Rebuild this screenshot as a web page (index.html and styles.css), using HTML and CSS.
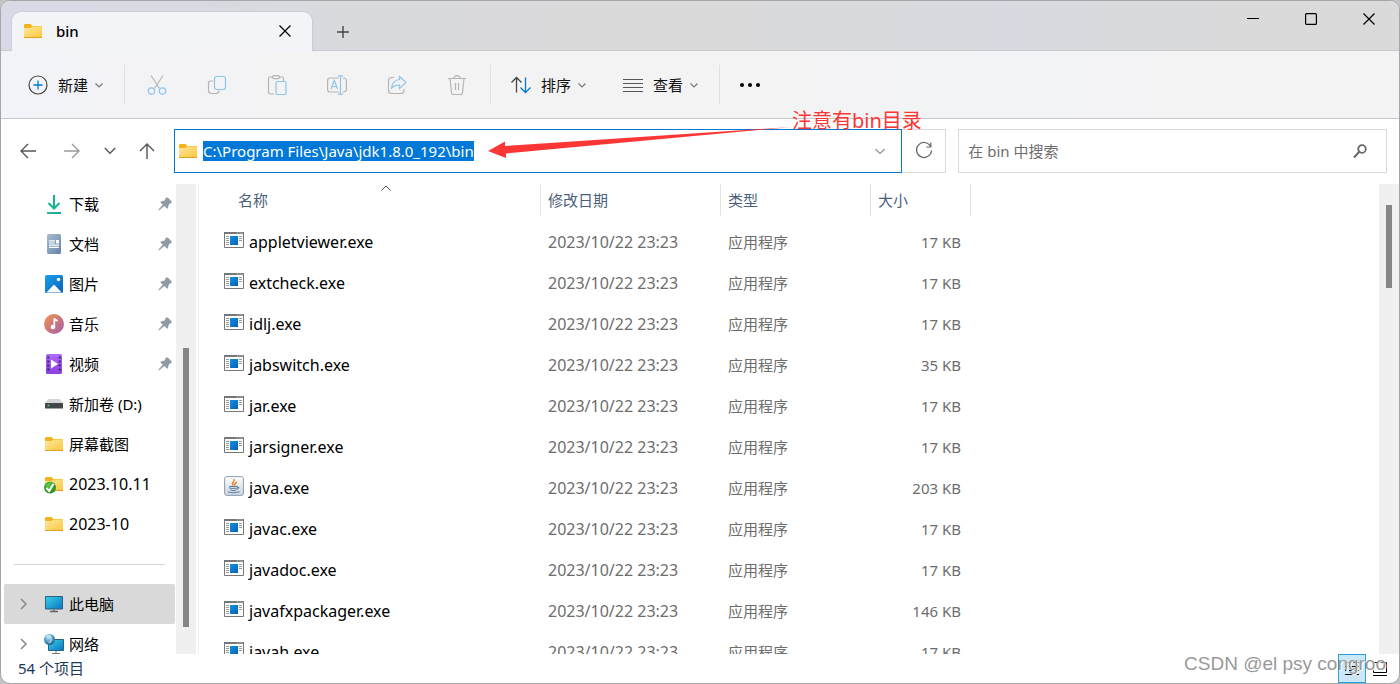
FILE: index.html
```html
<!DOCTYPE html>
<html lang="zh-CN">
<head>
<meta charset="utf-8">
<meta name="viewport" content="width=device-width, initial-scale=1">
<title>bin</title>
<link rel="stylesheet" href="styles.css">
</head>
<body>
<svg class="sprite" aria-hidden="true">
  <defs>
    <linearGradient id="g-folder" x1="0" y1="0" x2="1" y2="1"><stop offset="0" stop-color="#ffe7a0"/><stop offset="1" stop-color="#fcc93f"/></linearGradient>
    <linearGradient id="g-app" x1="0" y1="0" x2="1" y2="1"><stop offset="0" stop-color="#1391e0"/><stop offset="1" stop-color="#0560b8"/></linearGradient>
    <linearGradient id="g-screen" x1="0" y1="0" x2="1" y2="1"><stop offset="0" stop-color="#35d3e6"/><stop offset="1" stop-color="#0c72c4"/></linearGradient>
    <linearGradient id="g-down" x1="0" y1="0" x2="1" y2="1"><stop offset="0" stop-color="#2fc98a"/><stop offset="1" stop-color="#0a9c9c"/></linearGradient>
    <linearGradient id="g-doc" x1="0" y1="0" x2="1" y2="1"><stop offset="0" stop-color="#a9bdd2"/><stop offset="1" stop-color="#6584a6"/></linearGradient>
    <linearGradient id="g-pic" x1="0" y1="0" x2="1" y2="1"><stop offset="0" stop-color="#18a2ec"/><stop offset="1" stop-color="#0a5fb8"/></linearGradient>
    <linearGradient id="g-music" x1="0" y1="0" x2="1" y2="1"><stop offset="0" stop-color="#f1954c"/><stop offset="1" stop-color="#a85bb0"/></linearGradient>
    <linearGradient id="g-video" x1="0" y1="0" x2="0" y2="1"><stop offset="0" stop-color="#b06cf5"/><stop offset="1" stop-color="#8a3fe0"/></linearGradient>
    <linearGradient id="g-java" x1="0" y1="0" x2="0" y2="1"><stop offset="0" stop-color="#fdfdfd"/><stop offset="1" stop-color="#c9d3dc"/></linearGradient>
    <radialGradient id="g-globe" cx=".4" cy=".3" r=".7"><stop offset="0" stop-color="#c9e8f5"/><stop offset=".5" stop-color="#5aa5cc"/><stop offset="1" stop-color="#24638f"/></radialGradient>
    <radialGradient id="g-ok" cx=".4" cy=".3" r=".8"><stop offset="0" stop-color="#62c84a"/><stop offset="1" stop-color="#17820e"/></radialGradient>
  </defs>
  <symbol id="i-folder" viewBox="0 0 20 20"><path d="M1 4.500Q1 3 2 3h5.500l1.800 2H18q1 0 1 1v10.500H1z" fill="#f4b21b"/><path d="M1 7h6.500l2-1.500H19V16H1z" fill="url(#g-folder)"/><path d="M1 16h18v1H1z" fill="#e2a41f"/></symbol>
  <symbol id="i-folder-ok" viewBox="0 0 20 20"><use href="#i-folder"/><circle cx="6" cy="13.500" r="6" fill="url(#g-ok)"/><path d="M2.500 14l2.700 3L9.500 9.800" fill="none" stroke="#fff" stroke-width="2"/></symbol>
  <symbol id="i-app" viewBox="0 0 20 16"><path d="M.5.5h19v15H.5z" fill="#fff" stroke="#777"/><path d="M0 0h20v2H0z" fill="#777"/><path d="M13 1h1m1.500 0h1m1 0h1" stroke="#ddd"/><path d="M2 4.500h3m-3 2h3m-3 2h3m-3 2h3m-3 2h3M15 4.500h3m-3 2h3m-3 2h3" stroke="#999"/><path d="M6 4h8v9H6z" fill="url(#g-app)"/></symbol>
  <symbol id="i-java" viewBox="0 0 20 20"><rect x=".6" y=".6" width="18.800" height="18.800" rx="2" fill="url(#g-java)" stroke="#8b9eb1"/><path d="M9.500 9.500C6 7 12 5.500 9.700 3M11.200 9.500c-2-1.500 1.300-2.400 1.600-3.800" fill="none" stroke="#ed7a24" stroke-width="1.400"/><path d="M5.500 10.500h8q-.3 3.500-2 4H8q-2-.8-2.500-4zM13.500 11q3 .2 0 2.300M4 15.800q5 2 11.500 0" fill="none" stroke="#5c7f9c"/><path d="M7 12.400h5" stroke="#5c7f9c"/></symbol>
  <symbol id="i-down" viewBox="0 0 20 20"><path d="M10 1v13M4.500 9l5.500 5.500L15.500 9" fill="none" stroke="#13b38f" stroke-width="2"/><path d="M3 18h14v2H3z" fill="url(#g-down)"/></symbol>
  <symbol id="i-doc" viewBox="0 0 20 20"><rect x="3" width="14" height="20" rx="1.500" fill="url(#g-doc)"/><path d="M5 6.800h6M5 9h6M5 11.200h10M5 13.300h10" stroke="#fff" stroke-width="1.200"/><path d="M12 6h3v3.500h-3z" fill="#fff"/></symbol>
  <symbol id="i-pic" viewBox="0 0 20 20"><rect x="1" y="1" width="18" height="18" rx="1.500" fill="url(#g-pic)"/><path d="M2.500 18.500l7-7.500q.5-.5 1 0l7.200 7.500z" fill="#fff"/><circle cx="14.500" cy="5.500" r="1.700" fill="#fff"/></symbol>
  <symbol id="i-music" viewBox="0 0 20 20"><circle cx="10" cy="10" r="10" fill="url(#g-music)"/><circle cx="9" cy="13" r="2.300" fill="#fff"/><path d="M10.300 13V4.500q1 2 3.400 2.200" fill="none" stroke="#fff" stroke-width="1.700"/></symbol>
  <symbol id="i-video" viewBox="0 0 20 20"><rect x="2" width="16" height="20" rx="1.500" fill="url(#g-video)"/><path d="M4.300 2.500v16M15.700 2.500v16" stroke="#432070" stroke-width="2" stroke-dasharray="2 2"/><path d="M7 5.500l7 4.500-7 4.500z" fill="#fff"/></symbol>
  <symbol id="i-drive" viewBox="0 0 20 20"><path d="M4 5h12l3 5H1z" fill="#d3d5d8"/><rect x="1" y="9" width="18" height="5.500" rx=".5" fill="#44474a"/><path d="M3.500 11.500h2" stroke="#42e05c" stroke-width="1.400"/></symbol>
  <symbol id="i-pc" viewBox="0 0 20 20"><path d="M1.500 2.500h17v12.500h-17z" fill="url(#g-screen)" stroke="#28627d"/><path d="M10 15.500v2M6 17.500h8" stroke="#666" stroke-width="1.400"/></symbol>
  <symbol id="i-net" viewBox="0 0 20 20"><path d="M4.500 5.500h15v11h-15z" fill="url(#g-screen)" stroke="#28627d"/><path d="M12 17v2.500M8 19.500h8" stroke="#777"/><circle cx="5.500" cy="5.500" r="5.500" fill="url(#g-globe)"/><path d="M2 3q4-3 5 1T4.500 8.500" fill="none" stroke="#e1f4fb" opacity=".6" stroke-width="1.500"/></symbol>
  <symbol id="i-pin" viewBox="0 0 14 14"><path d="M8 .8q1-1.200 2 0l3.300 3.300q1 1-.2 1.800L10.800 7.500l-.8 3.500q-.4 1-1.300.2L6.300 9 1.500 13 .5 13.200.8 12.200 4.800 7.800 2.800 5.800Q2 5 3 4.500L6.500 3.500z" fill="#8f9aa3"/></symbol>
  <symbol id="i-chev" viewBox="0 0 10 10"><path d="M1.500 3.500L5 7l3.500-3.500" fill="none" stroke="currentColor" stroke-width="1.200"/></symbol>
  <symbol id="i-x" viewBox="0 0 12 12"><path d="M.5.5l11 11M11.500.5l-11 11" fill="none" stroke="currentColor" stroke-width="1.200"/></symbol>
</svg>

<div class="window">
  <header class="titlebar">
    <div class="tab">
      <svg class="ic20"><use href="#i-folder"/></svg>
      <span class="tab-title">bin</span>
      <button class="plain" aria-label="关闭标签页"><svg class="ic12"><use href="#i-x"/></svg></button>
    </div>
    <button class="plain new-tab" aria-label="新建标签页"><svg class="ic12" viewBox="0 0 12 12"><path d="M6 0v12M0 6h12" stroke="#444" stroke-width="1.400"/></svg></button>
    <div class="win-buttons">
      <button class="plain" aria-label="最小化"><svg class="ic12" viewBox="0 0 12 12"><path d="M0 5.500h12" stroke="#000"/></svg></button>
      <button class="plain" aria-label="最大化"><svg class="ic12" viewBox="0 0 12 12"><rect x=".6" y=".6" width="10.800" height="10.800" rx="1" fill="none" stroke="#000" stroke-width="1.200"/></svg></button>
      <button class="plain" aria-label="关闭"><svg class="ic12"><use href="#i-x"/></svg></button>
    </div>
  </header>

  <div class="toolbar" role="toolbar">
    <button class="plain tool first"><svg class="ic20" viewBox="0 0 20 20"><circle cx="10" cy="10" r="9" fill="none" stroke="#444" stroke-width="1.200"/><path d="M10 5.500v9M5.500 10h9" stroke="#0078d4" stroke-width="1.300"/></svg>新建<svg class="ic10"><use href="#i-chev"/></svg></button>
    <span class="sep"></span>
    <div class="group">
      <button class="plain tool-icon" aria-label="剪切" disabled><svg class="ic20" viewBox="0 0 20 20" fill="none"><path d="M4 .5l8.500 13M16 .5l-8.500 13" stroke="#b5b5b5" stroke-width="1.200"/><circle cx="4.500" cy="16" r="3.200" stroke="#8ec5ee" stroke-width="1.200"/><circle cx="15.500" cy="16" r="3.200" stroke="#8ec5ee" stroke-width="1.200"/></svg></button>
      <button class="plain tool-icon" aria-label="复制" disabled><svg class="ic20" viewBox="0 0 20 20" fill="none" stroke-width="1.200"><path d="M6 6H3.500Q1.500 6 1.500 8v7.500q0 3 3 3H9q3 0 3-3" stroke="#b5b5b5"/><rect x="7.500" y="1.500" width="11" height="13" rx="2.500" stroke="#8ec5ee"/></svg></button>
      <button class="plain tool-icon" aria-label="粘贴" disabled><svg class="ic20" viewBox="0 0 20 20" fill="none" stroke-width="1.200"><path d="M7 19H3q-1.500 0-1.500-1.500v-14Q1.500 2 3 2h12q1.500 0 1.500 1.500V6" stroke="#b5b5b5"/><rect x="5.500" y=".6" width="7" height="3" rx="1.500" fill="#f3f3f3" stroke="#b5b5b5"/><rect x="9" y="6.500" width="10" height="13" rx="1.500" stroke="#8ec5ee"/></svg></button>
      <button class="plain tool-icon" aria-label="重命名" disabled><svg class="ic20" viewBox="0 0 20 20" fill="none" stroke-width="1.200"><path d="M12 3H3Q.6 3 .6 5.500v9Q.6 17 3 17h9M16 3q3.400 0 3.400 3v8q0 3-3.400 3" stroke="#b5b5b5"/><path d="M4 14l3.300-8.500L10.600 14M5 11.500h4.600M13.500.8v18.400M11 .8h5M11 19.200h5" stroke="#8ec5ee"/></svg></button>
      <button class="plain tool-icon" aria-label="共享" disabled><svg class="ic20" viewBox="0 0 20 20" fill="none" stroke-width="1.200"><path d="M7 2.500H4.500q-3 0-3 3v10q0 3 3 3H14q3 0 3-3V14" stroke="#b5b5b5"/><path d="M12.500 1.500l6.500 6-6.500 6V10q-5-.2-8 3 .7-7.500 8-8.500z" stroke="#8ec5ee"/></svg></button>
      <button class="plain tool-icon" aria-label="删除" disabled><svg class="ic20" viewBox="0 0 20 20" fill="none" stroke="#b5b5b5" stroke-width="1.200"><path d="M1 3.500h18M7 3.500Q7 .6 10 .6t3 2.900M3 3.500l1.500 14q.2 2 2 2h7q1.800 0 2-2l1.500-14M8.500 8v7M11.500 8v7"/></svg></button>
    </div>
    <span class="sep"></span>
    <button class="plain tool"><svg class="ic20" viewBox="0 0 20 20" fill="none" stroke-width="1.300"><path d="M5.500 17.500v-15M.5 7.500l5-5 5 5" stroke="#444"/><path d="M14.500 2.500v15M9.500 12.500l5 5 5-5" stroke="#0078d4"/></svg>排序<svg class="ic10"><use href="#i-chev"/></svg></button>
    <button class="plain tool view"><svg class="ic20" viewBox="0 0 20 20" stroke="#555"><path d="M0 4.500h20M0 8.500h20M0 12.500h20M0 16.500h20"/></svg>查看<svg class="ic10"><use href="#i-chev"/></svg></button>
    <span class="sep"></span>
    <button class="plain tool" aria-label="更多"><svg class="ic20" viewBox="0 0 20 20"><circle cx="2" cy="10" r="2"/><circle cx="10" cy="10" r="2"/><circle cx="18" cy="10" r="2"/></svg></button>
  </div>

  <div class="navrow">
    <nav class="nav">
      <button class="plain" aria-label="后退"><svg class="ic16" viewBox="0 0 16 16"><path d="M16 8H1M8 1L1 8l7 7" fill="none" stroke="#555" stroke-width="1.400"/></svg></button>
      <button class="plain" aria-label="前进"><svg class="ic16" viewBox="0 0 16 16"><path d="M0 8h15M8 1l7 7-7 7" fill="none" stroke="#999" stroke-width="1.400"/></svg></button>
      <button class="plain slim" aria-label="最近"><svg class="ic12" viewBox="0 0 12 12"><path d="M.8 3L6 8.200 11.200 3" fill="none" stroke="#555" stroke-width="1.400"/></svg></button>
      <button class="plain" aria-label="向上"><svg class="ic16" viewBox="0 0 16 16"><path d="M8 16V1M1 8l7-7 7 7" fill="none" stroke="#555" stroke-width="1.400"/></svg></button>
    </nav>
    <div class="address">
      <svg class="ic20"><use href="#i-folder"/></svg>
      <input class="path" type="text" aria-label="地址" value="C:\Program Files\Java\jdk1.8.0_192\bin">
      <button class="plain drop" aria-label="历史地址"><svg class="ic12" viewBox="0 0 12 12"><path d="M1.500 4L6 8.500 10.500 4" fill="none" stroke="#444"/></svg></button>
      <div class="note">
        <svg class="note-arrow" viewBox="0 0 304 36"><path d="M0 24L17 14.500V19L304 0 18 26.500V31z" fill="#fb3735"/></svg>
        <span>注意有bin目录</span>
      </div>
    </div>
    <button class="plain refresh" aria-label="刷新"><svg class="ic20" viewBox="0 0 20 20" fill="none" stroke="#666" stroke-width="1.200"><path d="M16.500 5.200A7.500 7.500 0 1 0 17.500 9.500M16.800 1.500v4.500h-4.500"/></svg></button>
    <div class="search">
      <input type="search" aria-label="搜索" placeholder="在 bin 中搜索">
      <svg class="ic16" viewBox="0 0 16 16" fill="none" stroke="#666"><circle cx="10" cy="6" r="3.800" stroke-width="1.800"/><path d="M7.500 8.500L2 14.500" stroke-width="2"/></svg>
    </div>
  </div>

  <main class="content">
    <aside class="sidebar">
      <ul>
        <li><svg class="ic20"><use href="#i-down"/></svg>下载<svg class="pin"><use href="#i-pin"/></svg></li>
        <li><svg class="ic20"><use href="#i-doc"/></svg>文档<svg class="pin"><use href="#i-pin"/></svg></li>
        <li><svg class="ic20"><use href="#i-pic"/></svg>图片<svg class="pin"><use href="#i-pin"/></svg></li>
        <li><svg class="ic20"><use href="#i-music"/></svg>音乐<svg class="pin"><use href="#i-pin"/></svg></li>
        <li><svg class="ic20"><use href="#i-video"/></svg>视频<svg class="pin"><use href="#i-pin"/></svg></li>
        <li><svg class="ic20"><use href="#i-drive"/></svg>新加卷 (D:)</li>
        <li><svg class="ic20"><use href="#i-folder"/></svg>屏幕截图</li>
        <li class="latin"><svg class="ic20"><use href="#i-folder-ok"/></svg>2023.10.11</li>
        <li class="latin"><svg class="ic20"><use href="#i-folder"/></svg>2023-10</li>
      </ul>
      <hr>
      <ul>
        <li class="tree selected"><svg class="ic12 twist" viewBox="0 0 12 12"><path d="M4 1l5 5-5 5" fill="none" stroke="#888" stroke-width="1.500"/></svg><svg class="ic20"><use href="#i-pc"/></svg>此电脑</li>
        <li class="tree"><svg class="ic12 twist" viewBox="0 0 12 12"><path d="M4 1l5 5-5 5" fill="none" stroke="#888" stroke-width="1.500"/></svg><svg class="ic20"><use href="#i-net"/></svg>网络</li>
      </ul>
    </aside>
    <div class="scroll side-scroll"><div class="thumb"></div></div>
    <section class="files">
      <table>
        <colgroup><col class="c-name"><col class="c-date"><col class="c-type"><col class="c-size"></colgroup>
        <thead>
          <tr>
            <th><div class="th name-head">名称<svg class="sort" viewBox="0 0 10 6"><path d="M.5 5.500L5 1l4.500 4.500" fill="none" stroke="#555"/></svg></div></th>
            <th><div class="th">修改日期</div></th>
            <th><div class="th">类型</div></th>
            <th><div class="th">大小</div></th>
          </tr>
        </thead>
        <tbody>
          <tr><td><div class="file"><svg class="app"><use href="#i-app"/></svg>appletviewer.exe</div></td><td class="latin">2023/10/22 23:23</td><td>应用程序</td><td>17 KB</td></tr>
          <tr><td><div class="file"><svg class="app"><use href="#i-app"/></svg>extcheck.exe</div></td><td class="latin">2023/10/22 23:23</td><td>应用程序</td><td>17 KB</td></tr>
          <tr><td><div class="file"><svg class="app"><use href="#i-app"/></svg>idlj.exe</div></td><td class="latin">2023/10/22 23:23</td><td>应用程序</td><td>17 KB</td></tr>
          <tr><td><div class="file"><svg class="app"><use href="#i-app"/></svg>jabswitch.exe</div></td><td class="latin">2023/10/22 23:23</td><td>应用程序</td><td>35 KB</td></tr>
          <tr><td><div class="file"><svg class="app"><use href="#i-app"/></svg>jar.exe</div></td><td class="latin">2023/10/22 23:23</td><td>应用程序</td><td>17 KB</td></tr>
          <tr><td><div class="file"><svg class="app"><use href="#i-app"/></svg>jarsigner.exe</div></td><td class="latin">2023/10/22 23:23</td><td>应用程序</td><td>17 KB</td></tr>
          <tr><td><div class="file"><svg class="app java"><use href="#i-java"/></svg>java.exe</div></td><td class="latin">2023/10/22 23:23</td><td>应用程序</td><td>203 KB</td></tr>
          <tr><td><div class="file"><svg class="app"><use href="#i-app"/></svg>javac.exe</div></td><td class="latin">2023/10/22 23:23</td><td>应用程序</td><td>17 KB</td></tr>
          <tr><td><div class="file"><svg class="app"><use href="#i-app"/></svg>javadoc.exe</div></td><td class="latin">2023/10/22 23:23</td><td>应用程序</td><td>17 KB</td></tr>
          <tr><td><div class="file"><svg class="app"><use href="#i-app"/></svg>javafxpackager.exe</div></td><td class="latin">2023/10/22 23:23</td><td>应用程序</td><td>146 KB</td></tr>
          <tr><td><div class="file"><svg class="app"><use href="#i-app"/></svg>javah.exe</div></td><td class="latin">2023/10/22 23:23</td><td>应用程序</td><td>17 KB</td></tr>
        </tbody>
      </table>
    </section>
    <div class="scroll main-scroll"><div class="thumb"></div></div>
  </main>

  <footer class="status">
    <span class="count">54 个项目</span>
    <div class="views">
      <button class="plain active" aria-label="详细信息"><svg class="ic16" viewBox="0 0 16 16" stroke="#000"><path d="M1 1.500h3m1 0h10M1 5.500h3m1 0h10M1 9.500h3m1 0h10M1 13.500h14"/></svg></button>
      <button class="plain" aria-label="大图标"><svg class="ic16" viewBox="0 0 16 16" fill="none" stroke="#000"><path d="M1.500 1.500h13v10h-13zM1 14.500h14"/></svg></button>
    </div>
  </footer>
  <div class="watermark">CSDN @el psy congroo</div>
</div>
</body>
</html>
```
FILE: styles.css
```css
* { box-sizing: border-box; }

body {
  margin: 0;
  height: 100vh;
  background: #c4c4c6;
  color: #000;
  font: 15px/20px "Noto Sans", "Noto Sans CJK SC", sans-serif;
}

.sprite { position: absolute; width: 0; height: 0; }

.window {
  position: relative;
  display: flex;
  flex-direction: column;
  height: 100%;
  overflow: hidden;
  background: #fff;
  border: 1px solid #a6a6a8;
  border-radius: 10px;
}

.plain {
  display: flex;
  align-items: center;
  justify-content: center;
  padding: 0;
  border: 0;
  background: none;
  color: inherit;
  font: inherit;
}

svg { display: block; flex: none; }
.ic10 { width: 10px; height: 10px; }
.ic12 { width: 12px; height: 12px; }
.ic16 { width: 16px; height: 16px; }
.ic20 { width: 20px; height: 20px; }
.latin { font-size: 16px; }

/* Title bar */
.titlebar {
  display: flex;
  flex: none;
  height: 50px;
  padding-left: 11px;
  background: linear-gradient(90deg, #d8d9e6, #d9dadd 25%, #dadada 50%, #d7dae0 72%, #dadada 90%);
  border-bottom: 1px solid #c8c9cd;
}

.tab {
  display: flex;
  align-items: center;
  width: 300px;
  height: 39px;
  margin-top: 11px;
  padding: 0 21px 2px 11px;
  background: #f3f4f8;
  border-radius: 9px 9px 0 0;
  box-shadow: 0 0 1px 1px #cccdd4;
  clip-path: inset(-2px -2px 0);
}

.tab-title { flex: 1; padding-left: 13px; font-weight: 500; }
.new-tab { width: 40px; height: 36px; margin: 13px 0 0 11px; }
.win-buttons { display: flex; height: 36px; margin: 0 1px 0 auto; }
.win-buttons button { width: 58px; }

/* Command bar */
.toolbar {
  display: flex;
  flex: none;
  align-items: center;
  height: 68px;
  background: linear-gradient(90deg, #f2f3f8, #f3f3f3 25%, #f3f3f3 50%, #f2f3f6 72%, #f3f3f3 90%);
  border-bottom: 1px solid #c8c9cd;
}

.tool { gap: 10px; height: 40px; padding: 0 20px; color: #111; }
.tool .ic10 { margin-left: -4px; color: #777; }
.tool.first { padding-left: 27px; }
.tool.view { padding-left: 16px; }
.sep { width: 1px; height: 39px; background: #e0e0e2; }
.group { display: flex; padding: 0 3px 0 2px; }
.tool-icon { width: 60px; height: 40px; }

/* Navigation row */
.navrow {
  display: flex;
  flex: none;
  align-items: stretch;
  height: 65px;
  padding: 10px 12px 11px 0;
}

.nav { display: flex; width: 173px; padding-left: 5px; }
.nav button { width: 44px; }
.nav .slim { width: 32px; }
.nav button:last-child { width: 42px; }

.address {
  position: relative;
  display: flex;
  flex: 716;
  align-items: center;
  padding: 0 8px 0 3px;
  border: 1px solid #0078d4;
}

.path {
  field-sizing: content;
  height: 20px;
  margin-left: 5px;
  padding: 0;
  border: 0;
  outline: 0;
  background: #0078d7;
  color: #fff;
  font: inherit;
}

.drop { width: 26px; height: 36px; margin-left: auto; }

.note {
  position: absolute;
  top: -21px;
  left: 313px;
  display: flex;
  align-items: flex-start;
  color: #fb3735;
  font-size: 20px;
  line-height: 24px;
  white-space: nowrap;
  pointer-events: none;
}

.note-arrow { width: 304px; height: 36px; margin-top: 18px; }

.refresh { width: 44px; border: 1px solid #d9d9d9; border-left: 0; }

.search {
  display: flex;
  flex: 400;
  align-items: center;
  margin-left: 12px;
  padding: 0 18px 0 9px;
  border: 1px solid #d9d9d9;
}

.search input {
  flex: 1;
  min-width: 0;
  padding: 0;
  border: 0;
  outline: 0;
  background: none;
  font: inherit;
}

.search input::placeholder { color: #6d6d6d; }

/* Body */
.content { display: flex; flex: 1; min-height: 0; }

.sidebar { width: 175px; overflow: hidden; }
.sidebar ul { margin: 0; padding: 0 0 0 3px; list-style: none; }

.sidebar li {
  display: flex;
  align-items: center;
  gap: 5px;
  height: 40px;
  margin-right: 1px;
  padding: 0 3px 0 40px;
  border-radius: 2px;
  white-space: nowrap;
}

.sidebar .pin { width: 14px; height: 14px; margin-left: auto; }
.sidebar .tree { padding-left: 13px; }
.twist { margin-right: 10px; }
.sidebar .selected { background: #d9d9d9; }
.sidebar hr { height: 1px; margin: 20px 11px 19px 13px; border: 0; background: #d4d4d4; }

.scroll { display: grid; flex: none; width: 20px; background: #f0f0f0; }
.thumb { grid-row: 2; width: 6px; margin: 0 auto; background: #868686; }
.side-scroll { grid-template-rows: 164fr 279fr 27fr; }
.main-scroll { grid-template-rows: 21fr 83fr 366fr; }

.files {
  flex: 1;
  min-width: 0;
  margin-left: 2px;
  overflow: hidden;
  border-left: 1px solid #f0f0f0;
}

table { width: 772px; table-layout: fixed; border-collapse: collapse; }
.c-name { width: 342px; }
.c-date { width: 180px; }
.c-type { width: 150px; }
.c-size { width: 100px; }

th { height: 37px; padding: 0; vertical-align: top; font-weight: 400; text-align: left; color: #4c607a; }

.th {
  position: relative;
  height: 32px;
  padding: 6px 0 0 7px;
  border-right: 1px solid #e2e2e2;
}

.name-head { padding-left: 39px; }
.sort { position: absolute; top: 1px; left: 182px; width: 10px; height: 6px; }

td { height: 41px; padding: 0 0 0 7px; color: #6d6d6d; white-space: nowrap; }
td:first-child { padding-left: 25px; color: #000; font-size: 16px; }
td:last-child { padding-right: 10px; text-align: right; }
.file { display: flex; align-items: center; gap: 5px; }
.app { width: 20px; height: 16px; margin-bottom: 3px; }
.java { height: 20px; }

/* Status bar */
.status {
  display: flex;
  flex: none;
  align-items: flex-start;
  justify-content: space-between;
  height: 29px;
  padding: 0 5px 0 17px;
  color: #1e395b;
}

.count { padding: 4px 12px 0 0; }
.views { display: flex; height: 29px; }
.views button { width: 28px; }
.views .active { background: #cce8f6; border: 1px solid #26a0da; }

.watermark {
  position: absolute;
  right: 13px;
  bottom: 7px;
  color: #999;
  font: 19px/24px "Liberation Sans", Arial, sans-serif;
  text-shadow: 1px 1px 0 #fff;
  pointer-events: none;
}
```
